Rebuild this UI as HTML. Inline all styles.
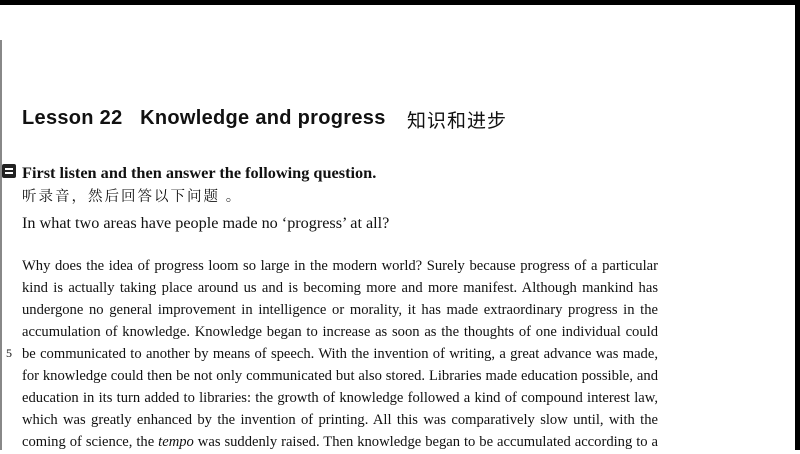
<!DOCTYPE html>
<html><head><meta charset="utf-8"><style>
body{margin:0;width:800px;height:450px;overflow:hidden;background:#fff;position:relative;font-family:"Liberation Serif",serif;color:#111}
.top{position:absolute;left:0;top:0;width:800px;height:5px;background:#000}
.right{position:absolute;right:0;top:0;width:5px;height:450px;background:#000}
.lft{position:absolute;left:0;top:40px;width:2px;height:410px;background:#888}
.t{position:absolute;left:22px;top:107px;font-family:"Liberation Sans",sans-serif;font-size:20px;letter-spacing:0.3px;white-space:nowrap;color:#111}
.cn{position:absolute;left:407px;top:106px;font-family:"Liberation Sans","Noto Sans CJK SC",sans-serif;font-size:19px;letter-spacing:1px;white-space:nowrap}
.h{position:absolute;left:22px;top:163px;font-weight:bold;font-size:16.3px;white-space:nowrap}
.ic{position:absolute;left:2px;top:164px;width:14px;height:14px;background:#222;border-radius:2px}
.ic:before,.ic:after{content:"";position:absolute;left:3px;width:8px;height:2px;background:#fff}
.ic:before{top:4px}.ic:after{top:8px}
.zh{position:absolute;left:22px;top:185px;font-family:"Noto Serif CJK SC",serif;font-size:14.5px;letter-spacing:2px;white-space:nowrap}
.q{position:absolute;left:22px;top:214px;font-size:16.2px;white-space:nowrap}
.body{position:absolute;left:22px;top:256px;width:636px;font-size:14.6px}
.body div{height:22px;line-height:20px;text-align:justify;text-align-last:justify;white-space:nowrap}
.n{position:absolute;left:6px;top:346px;font-size:12px}
</style></head><body>
<div class="top"></div><div class="right"></div><div class="lft"></div>
<div class="t"><b>Lesson 22&nbsp;&nbsp;&nbsp;Knowledge and progress</b></div>
<div class="cn">知识和进步</div>
<div class="ic"></div>
<div class="h">First listen and then answer the following question.</div>
<div class="zh">听录音，然后回答以下问题 。</div>
<div class="q">In what two areas have people made no ‘progress’ at all?</div>
<div class="n">5</div>
<div class="body">
<div>Why does the idea of progress loom so large in the modern world? Surely because progress of a particular</div>
<div>kind is actually taking place around us and is becoming more and more manifest. Although mankind has</div>
<div>undergone no general improvement in intelligence or morality, it has made extraordinary progress in the</div>
<div>accumulation of knowledge. Knowledge began to increase as soon as the thoughts of one individual could</div>
<div>be communicated to another by means of speech. With the invention of writing, a great advance was made,</div>
<div>for knowledge could then be not only communicated but also stored. Libraries made education possible, and</div>
<div>education in its turn added to libraries: the growth of knowledge followed a kind of compound interest law,</div>
<div>which was greatly enhanced by the invention of printing. All this was comparatively slow until, with the</div>
<div>coming of science, the <i>tempo</i> was suddenly raised. Then knowledge began to be accumulated according to a</div>
</div>
</body></html>
